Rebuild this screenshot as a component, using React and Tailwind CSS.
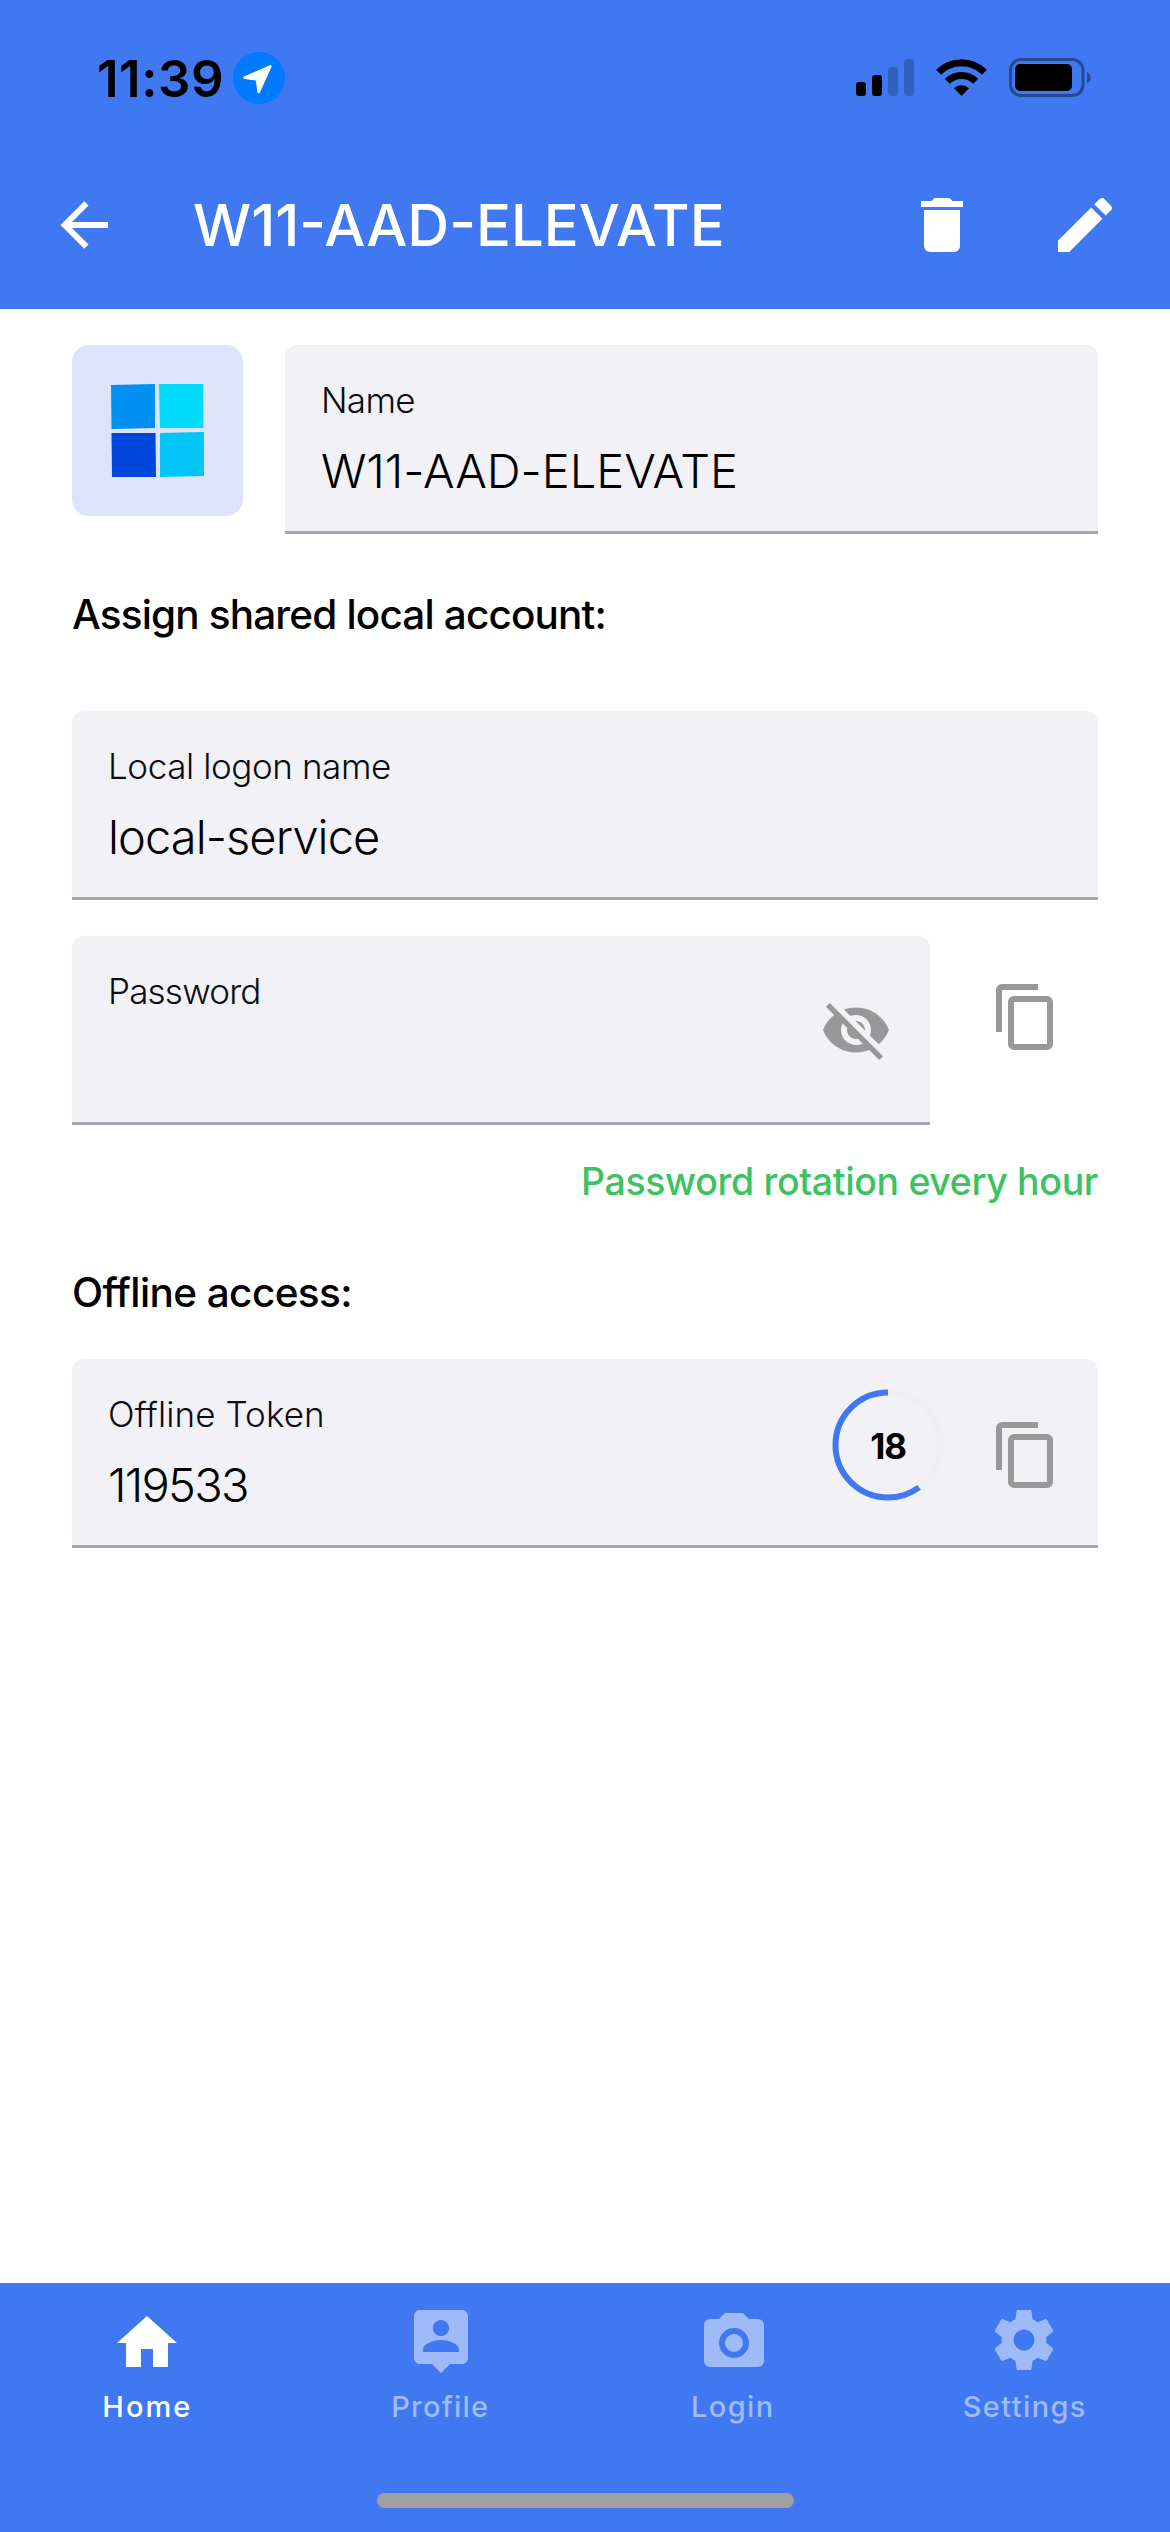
import React, { useState } from "react";

const valueClassName = "block h-[60px] text-[47px] font-light leading-[60px] text-black";
const labelClassName = "mb-[19px] block h-11 text-[35px] font-light leading-[44px] text-[#0c0c12]";
const sectionClassName = "h-[60px] text-[40.5px] font-medium leading-[60px] text-black";

const Icon = ({ d, className = "" }) => (
  <svg viewBox="0 0 24 24" fill="currentColor" className={`h-[72px] w-[72px] shrink-0 ${className}`}>
    <path d={d} fillRule="evenodd" />
  </svg>
);

const icons = {
  back: "M20,11V13H8L13.5,18.5L12.08,19.92L4.16,12L12.08,4.08L13.5,5.5L8,11H20Z",
  trash: "M19,4H15.5L14.5,3H9.5L8.5,4H5V6H19M6,19A2,2 0 0,0 8,21H16A2,2 0 0,0 18,19V7H6V19Z",
  pencil:
    "M20.71,7.04C21.1,6.65 21.1,6 20.71,5.63L18.37,3.29C18,2.9 17.35,2.9 16.96,3.29L15.12,5.12L18.87,8.87M3,17.25V21H6.75L17.81,9.93L14.06,6.18L3,17.25Z",
  copy: "M19,21H8V7H19M19,5H8A2,2 0 0,0 6,7V21A2,2 0 0,0 8,23H19A2,2 0 0,0 21,21V7A2,2 0 0,0 19,5M16,1H4A2,2 0 0,0 2,3V17H4V3H16V1Z",
  eyeOff:
    "M12 7c2.76 0 5 2.24 5 5 0 .65-.13 1.26-.36 1.83l2.92 2.92c1.51-1.26 2.7-2.89 3.43-4.75-1.73-4.39-6-7.5-11-7.5-1.4 0-2.74.25-3.98.7l2.16 2.16C10.74 7.13 11.35 7 12 7zM2 4.27l2.28 2.28.46.46C3.08 8.3 1.78 10.02 1 12c1.73 4.39 6 7.5 11 7.5 1.55 0 3.03-.3 4.38-.84l.42.42L19.73 22 21 20.73 3.27 3 2 4.27zM7.53 9.8l1.55 1.55c-.05.21-.08.43-.08.65 0 1.66 1.34 3 3 3 .22 0 .44-.03.65-.08l1.55 1.55c-.67.33-1.41.53-2.2.53-2.76 0-5-2.24-5-5 0-.79.2-1.53.53-2.2zm4.31-.78l3.15 3.15.02-.16c0-1.66-1.34-3-3-3l-.17.01z",
  home: "M10,20V14H14V20H19V12H22L12,3L2,12H5V20H10Z",
  profile:
    "M19 1H5c-1.1 0-2 .9-2 2v14c0 1.1.9 2 2 2h4l3 3 3-3h4c1.1 0 2-.9 2-2V3c0-1.1-.9-2-2-2zM12 4.3c1.49 0 2.7 1.21 2.7 2.7 0 1.49-1.21 2.7-2.7 2.7-1.49 0-2.7-1.21-2.7-2.7 0-1.49 1.21-2.7 2.7-2.7zM18 15H6v-.9c0-2 4-3.1 6-3.1s6 1.1 6 3.1v.9z",
  camera:
    "M4,4H7L9,2H15L17,4H20A2,2 0 0,1 22,6V18A2,2 0 0,1 20,20H4A2,2 0 0,1 2,18V6A2,2 0 0,1 4,4M12,7A5,5 0 0,0 7,12A5,5 0 0,0 12,17A5,5 0 0,0 17,12A5,5 0 0,0 12,7M12,9A3,3 0 0,1 15,12A3,3 0 0,1 12,15A3,3 0 0,1 9,12A3,3 0 0,1 12,9Z",
  cog: "M12,15.5A3.5,3.5 0 0,1 8.5,12A3.5,3.5 0 0,1 12,8.5A3.5,3.5 0 0,1 15.5,12A3.5,3.5 0 0,1 12,15.5M19.43,12.97C19.47,12.65 19.5,12.33 19.5,12C19.5,11.67 19.47,11.34 19.43,11L21.54,9.37C21.73,9.22 21.78,8.95 21.66,8.73L19.66,5.27C19.54,5.05 19.27,4.96 19.05,5.05L16.56,6.05C16.04,5.66 15.5,5.32 14.87,5.07L14.5,2.42C14.46,2.18 14.25,2 14,2H10C9.75,2 9.54,2.18 9.5,2.42L9.13,5.07C8.5,5.32 7.96,5.66 7.44,6.05L4.95,5.05C4.73,4.96 4.46,5.05 4.34,5.27L2.34,8.73C2.21,8.95 2.27,9.22 2.46,9.37L4.57,11C4.53,11.34 4.5,11.67 4.5,12C4.5,12.33 4.53,12.65 4.57,12.97L2.46,14.63C2.27,14.78 2.21,15.05 2.34,15.27L4.34,18.73C4.46,18.95 4.73,19.03 4.95,18.95L7.44,17.94C7.96,18.34 8.5,18.68 9.13,18.93L9.5,21.58C9.54,21.82 9.75,22 10,22H14C14.25,22 14.46,21.82 14.5,21.58L14.87,18.93C15.5,18.67 16.04,18.34 16.56,17.94L19.05,18.95C19.27,19.03 19.54,18.95 19.66,18.73L21.66,15.27C21.78,15.05 21.73,14.78 21.54,14.63L19.43,12.97Z",
};

const tabs = [
  { label: "Home", icon: icons.home, iconClassName: "translate-x-[1px]", labelClassName: "tracking-[2px] pl-[2px]" },
  { label: "Profile", icon: icons.profile, iconClassName: "translate-x-[2px]", labelClassName: "tracking-[1.2px] pl-[3px]" },
  { label: "Login", icon: icons.camera, iconClassName: "translate-x-[3px]", labelClassName: "tracking-[1.4px] pl-[3px]" },
  { label: "Settings", icon: icons.cog, iconClassName: "-translate-y-[3px]", labelClassName: "tracking-[1.4px] pl-[2px]" },
];

const StatusBar = () => (
  <div className="flex h-[156px] items-center pl-[97px] pr-[78px]">
    <span className="w-[136px] text-[51px] font-semibold leading-none tracking-[0.54px] text-black">11:39</span>
    <svg viewBox="0 0 52 52" className="h-[52px] w-[52px]">
      <circle cx="26" cy="26" r="26" fill="#007aff" />
      <path
        d="M37.3 14.4 L11.6 25.7 L23.9 27.2 L25.7 40 Z"
        fill="white"
        stroke="white"
        strokeWidth="2.6"
        strokeLinejoin="round"
      />
    </svg>
    <svg viewBox="0 0 58 38" className="ml-auto h-[38px] w-[58px]">
      <rect x="0" y="23" width="10" height="14" rx="3" />
      <rect x="16" y="16" width="10" height="21" rx="3" />
      <rect x="32" y="8" width="10" height="29" rx="3" opacity="0.2" />
      <rect x="48" y="0" width="10" height="37" rx="3" opacity="0.2" />
    </svg>
    <svg viewBox="0 0 51 38" className="ml-[22px] h-[38px] w-[51px]">
      <path d="M2.6 13.3 A32.2 32.2 0 0 1 48.4 13.3" fill="none" stroke="black" strokeWidth="7" />
      <path d="M11.3 22.3 A20 20 0 0 1 39.7 22.3" fill="none" stroke="black" strokeWidth="7" />
      <path d="M25.5 37 L18 29.3 A10.6 10.6 0 0 1 33 29.3 Z" />
    </svg>
    <svg viewBox="0 0 83 40" className="ml-[22px] h-10 w-[83px]">
      <rect x="1.5" y="1.5" width="72.5" height="36" rx="10.5" fill="none" stroke="black" strokeOpacity="0.4" strokeWidth="3" />
      <rect x="6" y="6" width="57" height="27" rx="5" />
      <path d="M78 14 A6.5 6.5 0 0 1 78 25.5 Z" opacity="0.4" />
    </svg>
  </div>
);

const Field = ({ label, value, spacing = "", labelSpacing = "", className = "", children }) => (
  <div
    className={`flex h-[189px] items-start border-b-[3px] border-[#a6a6ac] bg-[#f1f1f6] pl-9 pt-[33px] [border-top-left-radius:12px] [border-top-right-radius:12px] ${className}`}
  >
    <label className="block flex-1">
      <span className={`${labelClassName} ${labelSpacing}`}>{label}</span>
      <span className={`${valueClassName} ${spacing}`}>{value}</span>
    </label>
    {children}
  </div>
);

// Compte à rebours avant le renouvellement du jeton (30 secondes)
const Countdown = ({ seconds, total = 30 }) => {
  const radius = 52.5;
  const circumference = 2 * Math.PI * radius;
  const filled = circumference * (seconds / total);

  return (
    <div className="relative grid h-28 w-28 place-items-center">
      <svg viewBox="0 0 112 112" className="absolute inset-0 -scale-x-100">
        <circle cx="56" cy="56" r={radius} fill="none" stroke="#f0f0f0" strokeWidth="6" />
        <circle
          cx="56"
          cy="56"
          r={radius}
          fill="none"
          stroke="#3f78f0"
          strokeWidth="6"
          strokeDasharray={`${filled} ${circumference}`}
          transform="rotate(-90 56 56)"
        />
      </svg>
      <span className="relative pt-[3px] text-[35px] font-bold leading-none tracking-[-1.2px] text-black">{seconds}</span>
    </div>
  );
};

const App = () => {
  const [activeTab, setActiveTab] = useState("Home");

  return (
    <div className="flex h-[2532px] w-[1170px] flex-col overflow-hidden bg-white font-['Inter',sans-serif]">
      <header className="h-[309px] bg-[#3f78f0]">
        <StatusBar />
        <div className="flex h-[138px] items-center pl-[48px] pr-[49px] text-white">
          <button type="button">
            <Icon d={icons.back} />
          </button>
          <h1 className="ml-[73px] flex-1 whitespace-nowrap text-[58px] font-medium leading-none">W11-AAD-ELEVATE</h1>
          <button type="button">
            <Icon d={icons.trash} />
          </button>
          <button type="button" className="ml-[71px]">
            <Icon d={icons.pencil} />
          </button>
        </div>
      </header>

      <main className="flex-1 px-[72px] pt-9">
        <div className="flex items-start gap-[42px]">
          <div className="grid h-[171px] w-[171px] place-items-center rounded-[17px] bg-[#dde3f8]">
            <svg viewBox="0 0 94 94" className="h-[94px] w-[94px]">
              <path d="M0 1 L44 0 V44 L0.5 45 Z" fill="#0090f1" />
              <path d="M48 0 H92 L92.5 44 H49 Z" fill="#00dafb" />
              <path d="M0.5 49 H44.5 L45 93 H1 Z" fill="#0047dc" />
              <path d="M49 49 L93 48 V92 L49 93 Z" fill="#00c5f5" />
            </svg>
          </div>
          <Field
            label="Name"
            value="W11-AAD-ELEVATE"
            labelSpacing="tracking-[-0.7px]"
            spacing="tracking-[-0.05px]"
            className="flex-1"
          />
        </div>

        <h2 className={`mt-[51px] tracking-[-0.85px] ${sectionClassName}`}>Assign shared local account:</h2>

        <Field
          label="Local logon name"
          value="local-service"
          labelSpacing="tracking-[-0.41px]"
          spacing="tracking-[-0.93px]"
          className="mt-[66px]"
        />

        <div className="mt-9 flex items-start">
          <Field label="Password" value="" labelSpacing="tracking-[-0.8px]" className="w-[858px]">
            <button type="button" className="mr-[38px] mt-[25px] text-[#989898]">
              <Icon d={icons.eyeOff} />
            </button>
          </Field>
          <button type="button" className="ml-[60px] mt-[45px] text-[#989898]">
            <Icon d={icons.copy} />
          </button>
        </div>

        <p className="mt-[30px] h-[54px] text-right text-[37.5px] font-medium leading-[54px] tracking-[-0.35px] text-[#3cc261]">
          Password rotation every hour
        </p>

        <h2 className={`mt-[54px] tracking-[-0.6px] ${sectionClassName}`}>Offline access:</h2>

        <Field
          label="Offline Token"
          value="119533"
          labelSpacing="tracking-[0.09px]"
          spacing="tracking-[-1.73px]"
          className="mt-9"
        >
          <div className="-mt-[3px] mr-[46px]">
            <Countdown seconds={18} />
          </div>
          <button type="button" className="mr-9 mt-[27px] text-[#989898]">
            <Icon d={icons.copy} />
          </button>
        </Field>
      </main>

      <nav className="flex h-[249px] flex-col items-center border-t border-[#5a79c4] bg-[#3f78f0]">
        <div className="grid w-full grid-cols-4 pt-[23px]">
          {tabs.map((tab) => (
            <button
              key={tab.label}
              type="button"
              onClick={() => setActiveTab(tab.label)}
              className={`flex flex-col items-center ${tab.label === activeTab ? "text-white" : "text-[#9fbbf7]"}`}
            >
              <Icon d={tab.icon} className={tab.iconClassName} />
              <span className={`mt-[10px] text-[29px] font-[450] leading-9 ${tab.labelClassName}`}>{tab.label}</span>
            </button>
          ))}
        </div>
        <div className="mt-[68px] h-[15px] w-[417px] rounded-full bg-[#a0a0a0]" />
      </nav>
    </div>
  );
};

export default App;
